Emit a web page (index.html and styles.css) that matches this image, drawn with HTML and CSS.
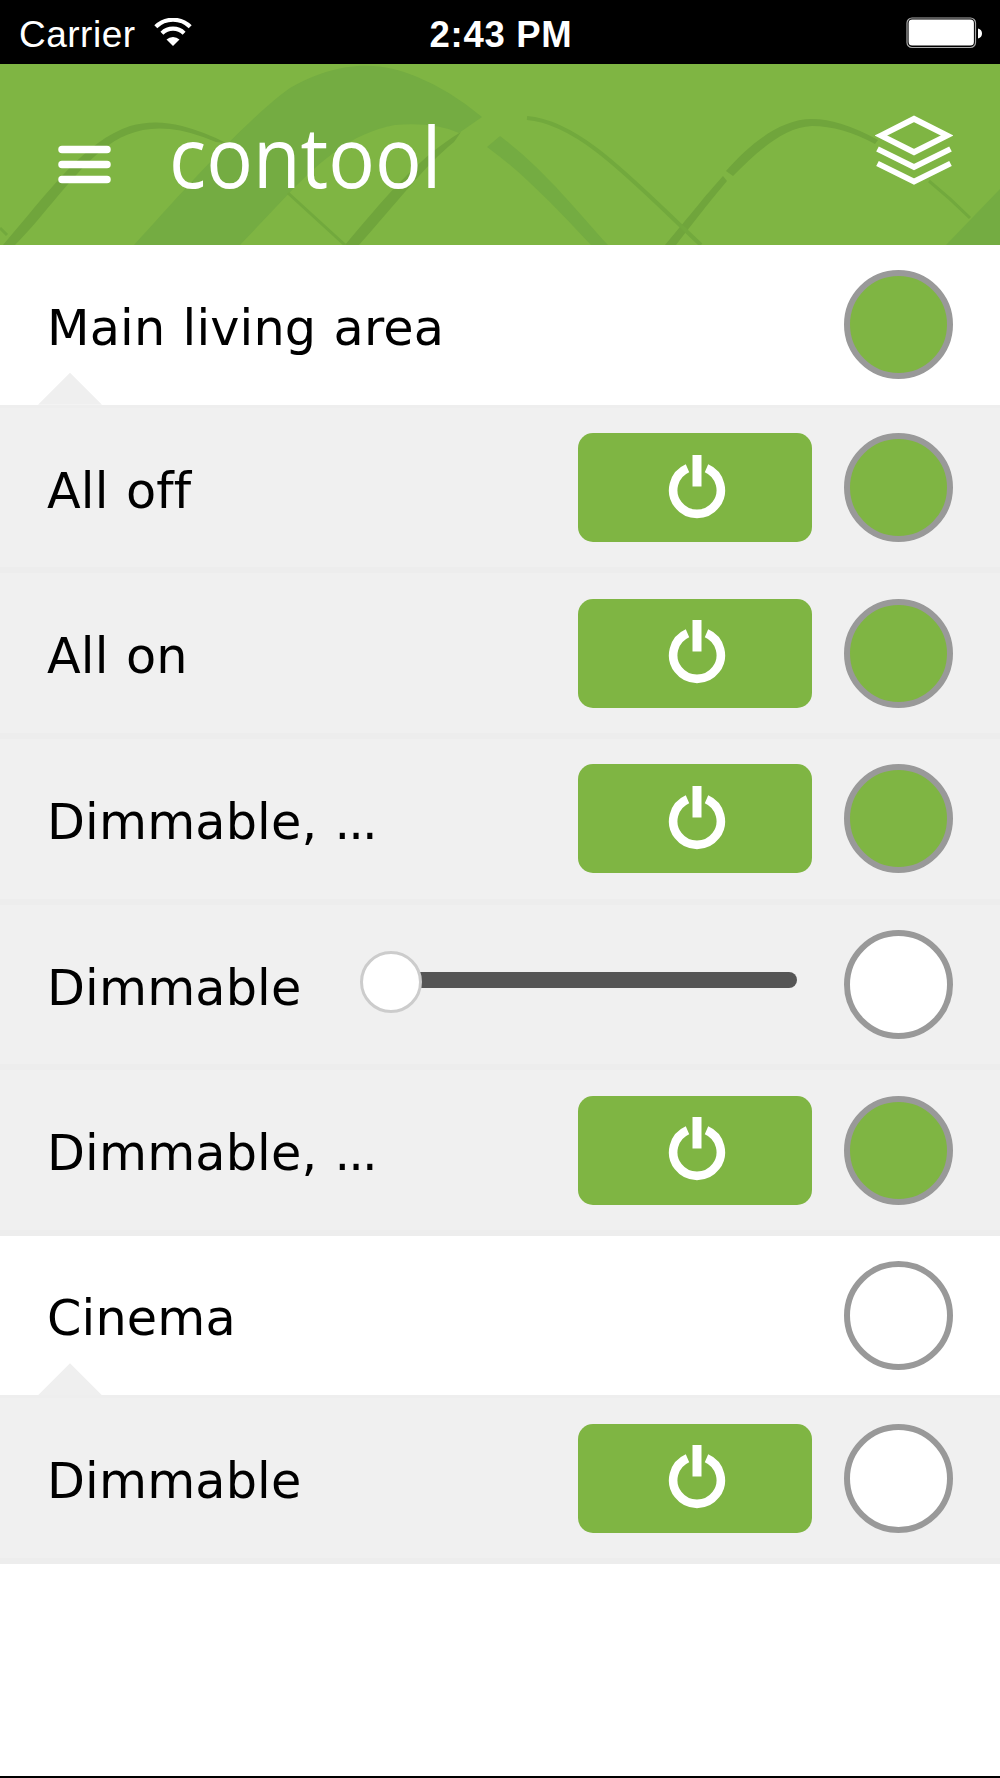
FILE: index.html
```html
<!DOCTYPE html>
<html lang="en">
<head>
<meta charset="utf-8">
<title>contool</title>
<link rel="stylesheet" href="styles.css">
</head>
<body>
<svg class="defs" width="0" height="0" aria-hidden="true">
  <symbol id="power" viewBox="0 0 58 64">
    <path d="M19.500 13.300A23.800 23.800 0 1 0 38.500 13.300" fill="none" stroke="#fff" stroke-width="8.600"/>
    <path d="M29 0v31.500" stroke="#fff" stroke-width="9"/>
  </symbol>
</svg>
<div class="screen">
  <div class="status">
    <div class="network">
      <span class="carrier">Carrier</span>
      <svg class="wifi" width="38" height="29" viewBox="0 0 38 29">
        <path d="M1.800 8.800a24.500 24.500 0 0 1 34.400 0" fill="none" stroke="#fff" stroke-width="4.200"/>
        <path d="M7.900 15.200a16 16 0 0 1 22.200 0" fill="none" stroke="#fff" stroke-width="4.200"/>
        <path d="M12.500 21.500a9.500 9.500 0 0 1 13 0L19 28z" fill="#fff"/>
      </svg>
    </div>
    <span class="clock">2:43 PM</span>
    <svg class="battery" width="77" height="32" viewBox="0 0 77 32">
      <rect x="1" y="1" width="68.500" height="29.500" rx="5" fill="none" stroke="#aaa" stroke-width="1.200"/>
      <rect x="2.600" y="2.600" width="65.300" height="26" rx="3.500" fill="#fff"/>
      <path d="M72 11.500q4 1 4 5t-4 5z" fill="#fff"/>
    </svg>
  </div>
  <header class="header">
    <svg class="waves" width="1000" height="181" viewBox="0 64 1000 181">
      <g fill="#74ac42">
        <path d="M134 245C180 195 245 120 290 88C345 57 385 64 415 76Q450 90 482 117L459 133Q435 122 395 125C350 133 320 163 295 187L240 245z"/>
        <path d="M487 147L500 136C545 170 575 209 608 245H591C555 207 522 172 487 147z"/>
        <path d="M946 245L1000 189V245z"/>
      </g>
      <g fill="#70a53c">
        <path d="M3 245C50 190 85 141 130 126Q155 119 182 126Q205 132 226 143L216 142Q190 131 170 129C142 126 120 135 102 150C72 174 45 215 15 245z"/>
        <path d="M345 245C385 198 415 160 461 132L454 142C425 165 395 205 359 245z"/>
        <path d="M665 245C692 213 704 197 723 176L727 181C710 201 697 218 676 245z"/>
        <path d="M726 171C750 144 780 119 812 119Q840 119 878 140L875 144Q842 126 812 126C785 127 760 149 733 176z"/>
      </g>
      <g fill="none" stroke="#72a93d" stroke-width="3">
        <path d="M288 193L345 245M0 228l7 7M929 181Q950 198 970 218"/>
        <path d="M527 118C580 122 635 183 701 245" stroke-width="4"/>
      </g>
    </svg>
    <svg class="menu" width="54" height="40" viewBox="0 0 54 40">
      <path d="M5 5.500H50M5 20.500H50M5 35.500H50" stroke="#fff" stroke-width="7.500" stroke-linecap="round"/>
    </svg>
    <h1 class="logo">contool</h1>
    <svg class="layers" width="78" height="70" viewBox="0 0 78 70">
      <g fill="none" stroke="#fff" stroke-width="5.800">
        <path d="M6 20.500L39 3.800L72 20.500L39 37.200z"/>
        <path d="M2.500 34L39 52L75.500 34"/>
        <path d="M2.500 48.500L39 66.500L75.500 48.500"/>
      </g>
    </svg>
  </header>
  <main>
    <div class="room"><span class="label">Main living area</span><i class="lamp on"></i><i class="notch"></i></div>
    <div class="group">
      <div class="row"><span class="label">All off</span><button class="power"><svg width="58" height="64"><use href="#power"/></svg></button><i class="lamp on"></i></div>
      <div class="row"><span class="label">All on</span><button class="power"><svg width="58" height="64"><use href="#power"/></svg></button><i class="lamp on"></i></div>
      <div class="row"><span class="label">Dimmable, <span class="dots">...</span></span><button class="power"><svg width="58" height="64"><use href="#power"/></svg></button><i class="lamp on"></i></div>
      <div class="row"><span class="label">Dimmable</span><div class="slider"><i class="knob"></i><i class="track"></i></div><i class="lamp"></i></div>
      <div class="row"><span class="label">Dimmable, <span class="dots">...</span></span><button class="power"><svg width="58" height="64"><use href="#power"/></svg></button><i class="lamp on"></i></div>
    </div>
    <div class="room"><span class="label">Cinema</span><i class="lamp"></i><i class="notch"></i></div>
    <div class="group">
      <div class="row"><span class="label">Dimmable</span><button class="power"><svg width="58" height="64"><use href="#power"/></svg></button><i class="lamp"></i></div>
    </div>
  </main>
</div>
</body>
</html>
```
FILE: styles.css
```css
* { box-sizing: border-box; }
body { margin: 0; background: #fff; color: #000; font-family: "DejaVu Sans", sans-serif; }
.defs { display: block; }
.screen { width: 1000px; height: 1778px; overflow: hidden; border-bottom: 2px solid #000; }

.status { display: grid; grid-template-columns: 1fr auto 1fr; align-items: start; height: 64px; padding: 0 17px 0 19px; background: #000; color: #fff; font-family: "Liberation Sans", sans-serif; font-size: 37px; line-height: 40px; }
.network { display: flex; align-items: flex-start; gap: 18px; }
.carrier { padding-top: 15px; letter-spacing: 0.5px; }
.wifi { margin-top: 18px; }
.clock { padding-top: 15px; font-size: 36.500px; font-weight: bold; letter-spacing: 0.7px; }
.battery { justify-self: end; margin-top: 17px; }

.header { position: relative; display: flex; align-items: flex-start; height: 181px; padding: 0 47px 0 57px; background: #7fb543; }
.waves { position: absolute; left: 0; top: 0; }
.menu { position: relative; margin-top: 80px; }
.logo { position: relative; margin: 37px 0 0 58px; color: #fff; font: 400 84px/110px "Open Sans", sans-serif; transform: scaleX(.925); transform-origin: left; }
.layers { position: relative; margin: 51px 0 0 auto; }

.room { position: relative; display: flex; align-items: center; height: 159.700px; padding: 0 47px; }
.notch { position: absolute; left: 38px; bottom: 0; width: 64px; height: 32px; background: #efefef; clip-path: polygon(50% 0, 100% 100%, 0 100%); }
.group { padding-bottom: 2.500px; background: #ededed; }
.row { display: flex; align-items: center; height: 165.700px; padding: 0 47px; border: solid #ededed; border-width: 3px 0; background: #f0f0f0; }
.group .row:first-child { border-top-color: #eee; }

.label { flex: 1; padding-top: 6px; font-size: 49.300px; line-height: 60px; letter-spacing: .15px; word-spacing: 1.500px; font-variant-ligatures: none; white-space: pre; }
.dots { letter-spacing: -2px; }
.lamp { flex: none; width: 109px; height: 109px; border: 6px solid #999; border-radius: 50%; background: #fff; }
.lamp.on { background: #7fb543; }
.power { flex: none; display: flex; align-items: center; justify-content: center; width: 234px; height: 109px; margin: 0 32px 0 0; padding: 0 0 2px 3px; border: 0; border-radius: 15px; background: #7fb543; }
.slider { flex: none; display: flex; align-items: center; width: 437px; margin: -6px 47px 0 0; }
.knob { position: relative; width: 62px; height: 62px; border: 3px solid #ccc; border-radius: 50%; background: #fff; }
.track { flex: 1; height: 16px; margin: -3px 0 0 -3px; border-radius: 0 8px 8px 0; background: #555; }
```
